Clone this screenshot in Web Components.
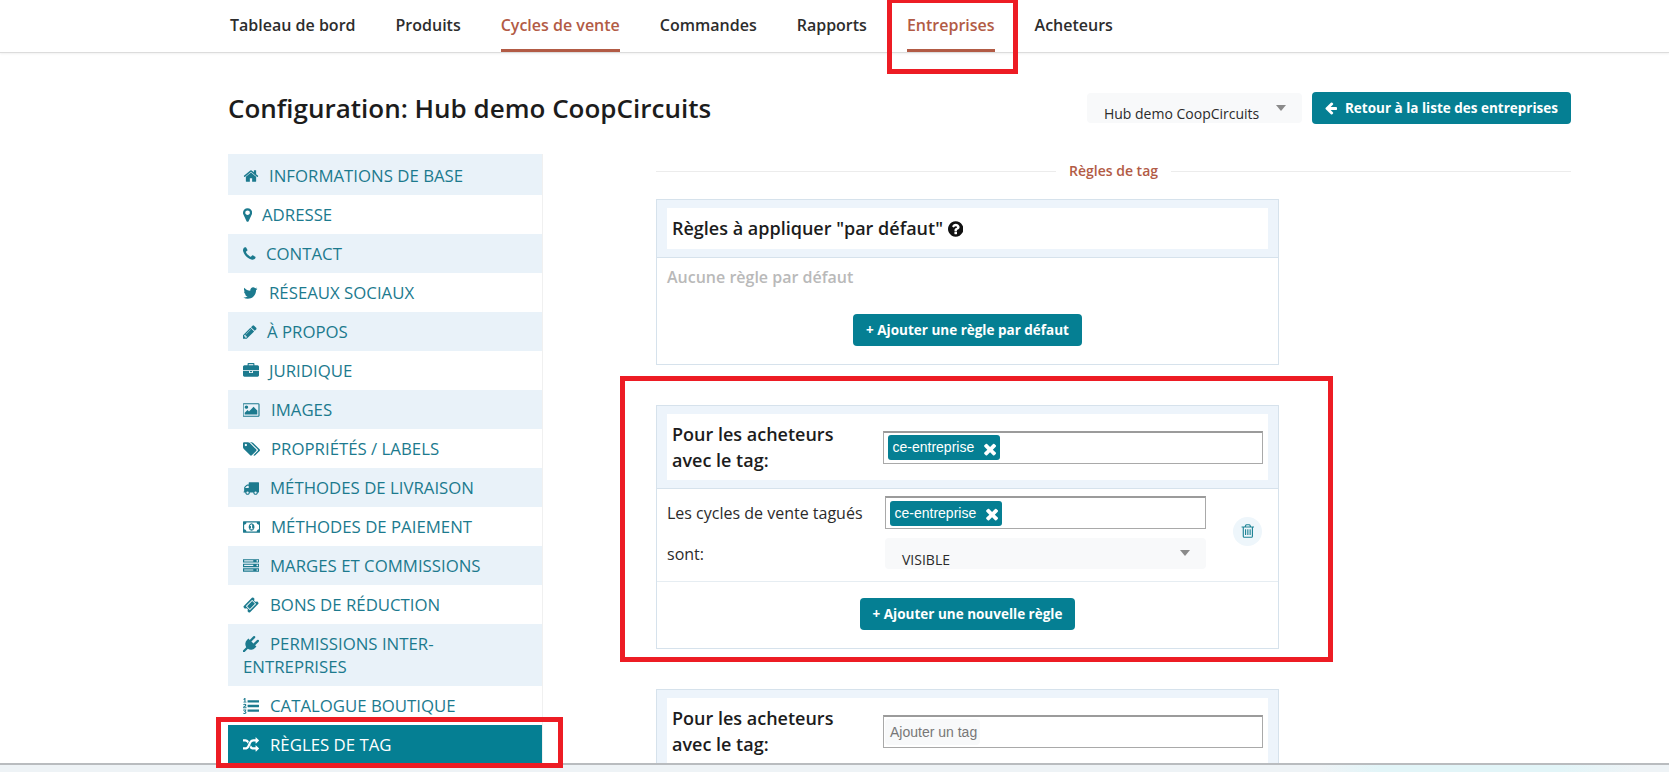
<!DOCTYPE html>
<html lang="fr">
<head>
<meta charset="utf-8">
<title>Règles de tag</title>
<style>
  html, body { margin: 0; height: 772px; overflow: hidden; background: #fff; }
  body { font-family: "Open Sans", "Liberation Sans", sans-serif; color: #222; }
</style>
</head>
<body>
<coop-page>
  <coop-nav slot="nav">
    <nav-link>Tableau de bord</nav-link>
    <nav-link>Produits</nav-link>
    <nav-link active>Cycles de vente</nav-link>
    <nav-link>Commandes</nav-link>
    <nav-link>Rapports</nav-link>
    <nav-link active>Entreprises</nav-link>
    <nav-link>Acheteurs</nav-link>
  </coop-nav>

  <page-head slot="head" title-text="Configuration: Hub demo CoopCircuits">
    <coop-select style="--w:215px;--h:30px;--pad:17px;--arrow:12px" >Hub demo CoopCircuits</coop-select>
    <coop-btn icon="arrow-left">Retour à la liste des entreprises</coop-btn>
  </page-head>

  <side-menu slot="side">
    <side-item icon="home" adv="26" alt>INFORMATIONS DE BASE</side-item>
    <side-item icon="marker" adv="19">ADRESSE</side-item>
    <side-item icon="phone" adv="23" alt>CONTACT</side-item>
    <side-item icon="twitter" adv="26">RÉSEAUX SOCIAUX</side-item>
    <side-item icon="pencil" adv="24" alt>À PROPOS</side-item>
    <side-item icon="briefcase" adv="26">JURIDIQUE</side-item>
    <side-item icon="picture" adv="28" alt>IMAGES</side-item>
    <side-item icon="tags" adv="28">PROPRIÉTÉS / LABELS</side-item>
    <side-item icon="truck" adv="27" alt>MÉTHODES DE LIVRAISON</side-item>
    <side-item icon="money" adv="28">MÉTHODES DE PAIEMENT</side-item>
    <side-item icon="server" adv="27" alt>MARGES ET COMMISSIONS</side-item>
    <side-item icon="ticket" adv="27">BONS DE RÉDUCTION</side-item>
    <side-item icon="plug" adv="27" alt>PERMISSIONS INTER-ENTREPRISES</side-item>
    <side-item icon="list" adv="27">CATALOGUE BOUTIQUE</side-item>
    <side-item icon="random" adv="27" active>RÈGLES DE TAG</side-item>
  </side-menu>

  <section-title slot="main">Règles de tag</section-title>

  <rule-card slot="main">
    <span slot="head" class="single">Règles à appliquer "par défaut" <coop-icon name="question" size="18" style="color:#111;vertical-align:-3px"></coop-icon></span>
    <empty-note>Aucune règle par défaut</empty-note>
    <btn-row style="--top:26px;--bottom:18px"><coop-btn>+ Ajouter une règle par défaut</coop-btn></btn-row>
  </rule-card>

  <rule-card slot="main">
    <tag-head slot="head"><tag-input><tag-chip>ce-entreprise</tag-chip></tag-input></tag-head>
    <tag-rule></tag-rule>
    <btn-row style="--top:16px;--bottom:18px"><coop-btn>+ Ajouter une nouvelle règle</coop-btn></btn-row>
  </rule-card>

  <rule-card slot="main">
    <tag-head slot="head"><tag-input placeholder="Ajouter un tag"></tag-input></tag-head>
  </rule-card>

  <red-box slot="over" style="left:887px;top:-2px;width:131px;height:76px"></red-box>
  <red-box slot="over" style="left:620px;top:376px;width:713px;height:286px"></red-box>
  <red-box slot="over" style="left:216px;top:717px;width:347px;height:51px"></red-box>
</coop-page>

<script>
const ICONS = {
  'home': [1792, 1792, 'M1472 992v480q0 26-19 45t-45 19h-384v-384h-256v384h-384q-26 0-45-19t-19-45v-480q0-1 .5-3t.5-3l575-474 575 474q1 2 1 6zm223-69l-62 74q-8 9-21 11h-3q-13 0-21-7l-692-577-692 577q-12 8-24 7-13-2-21-11l-62-74q-8-10-7-23.500t11-21.500l719-599q32-26 76-26t76 26l244 204v-195q0-14 9-23t23-9h192q14 0 23 9t9 23v408l219 182q10 8 11 21.500t-7 23.500z', 0],
  'marker': [1024, 1792, 'M1152 640q0-106-75-181t-181-75-181 75-75 181 75 181 181 75 181-75 75-181zm256 0q0 109-33 179l-364 774q-16 33-47.500 52t-67.500 19-67.500-19-46.500-52l-365-774q-33-70-33-179 0-212 150-362t362-150 362 150 150 362z', 384],
  'phone': [1408, 1792, 'M1600 1240q0 27-10 70.500t-21 68.500q-21 50-122 106-94 51-186 51-27 0-53-3.500t-57.500-12.500-47-14.500-55.500-20.500-49-18q-98-35-175-83-127-79-264-216t-216-264q-48-77-83-175-3-9-18-49t-20.500-55.500-14.500-47-12.500-57.500-3.500-53q0-92 51-186 56-101 106-122 25-11 68.500-21t70.500-10q14 0 21 3 18 6 53 76 11 19 30 54t35 63.500 31 53.500q3 4 17.500 25t21.500 35.500 7 28.500q0 20-28.500 50t-62 55-62 53-28.500 46q0 9 5 22.500t8.500 20.500 14 24 11.500 19q76 137 174 235t235 174q2 1 19 11.500t24 14 20.500 8.500 22.500 5q18 0 46-28.500t53-62 55-62 50-28.500q14 0 28.500 7t35.500 21.500 25 17.500q25 15 53.500 31t63.500 35 54 30q70 35 76 53 3 7 3 21z', 192],
  'twitter': [1664, 1792, 'M1684 408q-67 98-162 167 1 14 1 42 0 130-38 259.500t-115.500 248.500-184.500 210.500-258 146-323 54.500q-271 0-496-145 35 4 78 4 225 0 401-138-105-2-188-64.500t-114-159.500q33 5 61 5 43 0 85-11-112-23-185.500-111.500t-73.500-205.500v-4q68 38 146 41-66-44-105-115t-39-154q0-88 44-163 121 149 294.500 238.500t371.500 99.500q-8-38-8-74 0-134 94.500-228.500t228.500-94.500q140 0 236 102 109-21 205-78-37 115-142 178 93-10 186-50z', 64],
  'pencil': [1536, 1792, 'M491 1536l91-91-235-235-91 91v107h128v128h107zm523-928q0-22-22-22-10 0-17 7l-542 542q-7 7-7 17 0 22 22 22 10 0 17-7l542-542q7-7 7-17zm-54-192l416 416-832 832h-416v-416zm683 96q0 53-37 90l-166 166-416-416 166-165q36-38 90-38 53 0 91 38l235 234q37 39 37 91z', 128],
  'briefcase': [1792, 1792, 'M640 256h512v-128h-512v128zm1152 640v480q0 66-47 113t-113 47h-1472q-66 0-113-47t-47-113v-480h672v160q0 26 19 45t45 19h320q26 0 45-19t19-45v-160h672zm-768 0v128h-256v-128h256zm768-480v384h-1792v-384q0-66 47-113t113-47h352v-160q0-40 28-68t68-28h576q40 0 68 28t28 68v160h352q66 0 113 47t47 113z', 0],
  'picture': [1920, 1792, 'M576 576q0 80-56 136t-136 56-136-56-56-136 56-136 136-56 136 56 56 136zm1024 384v448h-1408v-192l320-320 160 160 512-512zm96-704h-1600q-13 0-22.500 9.500t-9.500 22.500v1216q0 13 9.500 22.500t22.500 9.500h1600q13 0 22.500-9.500t9.500-22.500v-1216q0-13-9.500-22.500t-22.500-9.500zm160 32v1216q0 66-47 113t-113 47h-1600q-66 0-113-47t-47-113v-1216q0-66 47-113t113-47h1600q66 0 113 47t47 113z', 0],
  'tags': [1920, 1792, 'M448 448q0-53-37.500-90.500t-90.500-37.500-90.500 37.500-37.500 90.500 37.500 90.500 90.500 37.500 90.500-37.500 37.500-90.500zm1067 576q0 53-37 90l-491 492q-39 37-91 37-53 0-90-37l-715-716q-38-37-64.500-101t-26.500-117v-416q0-52 38-90t90-38h416q53 0 117 26.500t102 64.500l715 714q37 39 37 91zm384 0q0 53-37 90l-491 492q-39 37-91 37-36 0-59-14t-53-45l470-470q37-37 37-90 0-52-37-91l-715-714q-38-38-102-64.500t-117-26.500h224q53 0 117 26.500t102 64.500l715 714q37 39 37 91z', 0],
  'truck': [1792, 1792, 'M640 1408q0-52-38-90t-90-38-90 38-38 90 38 90 90 38 90-38 38-90zm-384-512h384v-256h-158q-13 0-22 9l-195 195q-9 9-9 22v30zm1280 512q0-52-38-90t-90-38-90 38-38 90 38 90 90 38 90-38 38-90zm256-1088v1024q0 15-4 26.500t-13.500 18.500-16.500 11.500-23.500 6-22.500 2-25.500 0-22.500-.500q0 106-75 181t-181 75-181-75-75-181h-384q0 106-75 181t-181 75-181-75-75-181h-64q-3 0-22.500.500t-25.500 0-22.500-2-23.500-6-16.500-11.500-13.500-18.500-4-26.500q0-26 19-45t45-19v-320q0-8-.500-35t0-38 2.500-34.500 6.500-37 14-30.500 22.500-30l198-198q19-19 50.500-32t58.500-13h160v-192q0-26 19-45t45-19h1024q26 0 45 19t19 45z', 0],
  'money': [1920, 1792, 'M768 1152h384v-96h-128v-448h-114l-148 137 77 80q42-37 55-57h2v288h-128v96zm512-256q0 70-21 142t-59.500 134-101.500 101-138 39-138-39-101.500-101-59.500-134-21-142 21-142 59.500-134 101.500-101 138-39 138 39 101.500 101 59.500 134 21 142zm512 256v-512q-106 0-181-75t-75-181h-1152q0 106-75 181t-181 75v512q106 0 181 75t75 181h1152q0-106 75-181t181-75zm128-832v1152q0 26-19 45t-45 19h-1792q-26 0-45-19t-19-45v-1152q0-26 19-45t45-19h1792q26 0 45 19t19 45z', 0],
  'server': [1792, 1792, 'M128 1408h1024v-128h-1024v128zm0-512h1024v-128h-1024v128zm1568 448q0-40-28-68t-68-28-68 28-28 68 28 68 68 28 68-28 28-68zm-1568-960h1024v-128h-1024v128zm1568 448q0-40-28-68t-68-28-68 28-28 68 28 68 68 28 68-28 28-68zm0-512q0-40-28-68t-68-28-68 28-28 68 28 68 68 28 68-28 28-68zm96 832v384h-1792v-384h1792zm0-512v384h-1792v-384h1792zm0-512v384h-1792v-384h1792z', 0],
  'ticket': [1792, 1792, 'M1024 452l316 316-572 572-316-316zm-211 979l618-618q19-19 19-45t-19-45l-362-362q-18-18-45-18t-45 18l-618 618q-19 19-19 45t19 45l362 362q18 18 45 18t45-18zm889-637l-907 908q-37 37-90.500 37t-90.500-37l-126-126q56-56 56-136t-56-136-136-56-136 56l-125-126q-37-37-37-90.500t37-90.500l907-906q37-37 90.500-37t90.500 37l125 125q-56 56-56 136t56 136 136 56 136-56l126 125q37 37 37 90.500t-37 90.500z', 0],
  'plug': [1792, 1792, 'M1755 453q37 38 37 90.500t-37 90.500l-401 400 150 150-160 160q-163 163-389.500 186.500t-411.500-100.500l-362 362h-181v-181l362-362q-124-185-100.500-411.500t186.500-389.500l160-160 150 150 400-401q38-37 91-37t90 37 37 90.500-37 90.500l-400 401 234 234 401-400q38-37 91-37t90 37z', 0],
  'list': [1792, 1792, 'M381 1620q0 80-54.500 126t-135.500 46q-106 0-172-66l57-88q49 45 106 45 29 0 50.500-14.500t21.500-42.500q0-64-105-56l-26-56q8-10 32.500-43.500t42.500-54 37-38.500v-1q-16 0-48.500 1t-48.500 1v53h-106v-152h333v88l-95 115q51 12 81 49t30 88zm2-627v159h-362q-6-36-6-54 0-51 23.500-93t56.500-68 66-47.500 56.500-43.500 23.500-45q0-25-14.500-38.500t-39.500-13.500q-46 0-81 58l-85-59q24-51 71.500-79.500t105.500-28.500q73 0 123 41.500t50 112.500q0 50-34 91.500t-75 64.500-75.500 50.500-35.500 52.500h127v-60h105zm1409 319v192q0 13-9.500 22.500t-22.500 9.500h-1216q-13 0-22.500-9.500t-9.500-22.500v-192q0-14 9-23t23-9h1216q13 0 22.500 9.500t9.500 22.500zm-1408-899v99h-335v-99h107q0-41 .5-122t.5-121v-12h-2q-8 17-50 54l-71-76 136-127h106v404h108zm1408 387v192q0 13-9.500 22.500t-22.500 9.500h-1216q-13 0-22.500-9.500t-9.500-22.500v-192q0-14 9-23t23-9h1216q13 0 22.500 9.500t9.500 22.500zm0-512v192q0 13-9.500 22.500t-22.500 9.500h-1216q-13 0-22.500-9.500t-9.500-22.500v-192q0-13 9.500-22.500t22.500-9.500h1216q13 0 22.500 9.500t9.500 22.500z', 0],
  'random': [1792, 1792, 'M666 481q-60 92-137 273-22-45-37-72.500t-40.500-63.500-51-56.500-63-35-81.500-14.500h-224q-14 0-23-9t-9-23v-192q0-14 9-23t23-9h224q250 0 410 225zm1126 799q0 14-9 23l-320 320q-9 9-23 9-13 0-22.500-9.500t-9.500-22.500v-192q-32 0-85 .5t-81 1-73-1-71-5-64-10.500-63-18.500-58-28.500-59-40-55-53.500-56-69q59-93 136-273 22 45 37 72.500t40.500 63.500 51 56.500 63 35 81.500 14.500h256v-192q0-14 9-23t23-9q12 0 24 10l319 319q9 9 9 23zm0-896q0 14-9 23l-320 320q-9 9-23 9-13 0-22.500-9.500t-9.500-22.500v-192h-256q-48 0-87 15t-69 45-51 61.500-45 77.500q-32 62-78 171-29 66-49.500 111t-54 105-64 100-74 83-90 68.500-106.500 42-128 16.500h-224q-14 0-23-9t-9-23v-192q0-14 9-23t23-9h224q48 0 87-15t69-45 51-61.500 45-77.500q32-62 78-171 29-66 49.500-111t54-105 64-100 74-83 90-68.500 106.500-42 128-16.500h256v-192q0-14 9-23t23-9q12 0 24 10l319 319q9 9 9 23z', 0],
  'arrow-left': [1536, 1792, 'M1664 896v128q0 53-32.500 90.500t-84.500 37.500h-704l293 294q38 36 38 90t-38 90l-75 76q-37 37-90 37-52 0-91-37l-651-652q-37-37-37-90 0-52 37-91l651-650q38-38 91-38 52 0 90 38l75 74q38 38 38 91t-38 91l-293 293h704q52 0 84.500 37.500t32.500 90.500z', 128],
  'question': [1536, 1792, 'M1024 1376v-192q0-14-9-23t-23-9h-192q-14 0-23 9t-9 23v192q0 14 9 23t23 9h192q14 0 23-9t9-23zm256-672q0-88-55.500-163t-138.500-116-170-41q-243 0-371 213-15 24 8 42l132 100q7 6 19 6 16 0 25-12 53-68 86-92 34-24 86-24 48 0 85.500 26t37.500 59q0 38-20 61t-68 45q-63 28-115.500 86.500t-52.500 125.500v36q0 14 9 23t23 9h192q14 0 23-9t9-23q0-19 21.500-49.500t54.500-49.500q32-18 49-28.500t46-35 44.500-48 28-60.500 12.500-81zm384 192q0 209-103 385.500t-279.500 279.500-385.500 103-385.500-103-279.500-279.500-103-385.500 103-385.500 279.500-279.500 385.500-103 385.500 103 279.500 279.500 103 385.500z', 128],
  'trash': [1408, 1792, 'M704 736v576q0 14-9 23t-23 9h-64q-14 0-23-9t-9-23v-576q0-14 9-23t23-9h64q14 0 23 9t9 23zm256 0v576q0 14-9 23t-23 9h-64q-14 0-23-9t-9-23v-576q0-14 9-23t23-9h64q14 0 23 9t9 23zm256 0v576q0 14-9 23t-23 9h-64q-14 0-23-9t-9-23v-576q0-14 9-23t23-9h64q14 0 23 9t9 23zm128 724v-948h-896v948q0 22 7 40.500t14.500 27 10.500 8.500h832q3 0 10.500-8.500t14.500-27 7-40.500zm-672-1076h448l-48-117q-7-9-17-11h-317q-10 2-17 11zm928 32v64q0 14-9 23t-23 9h-96v948q0 83-47 143.500t-113 60.500h-832q-66 0-113-58.500t-47-141.500v-952h-96q-14 0-23-9t-9-23v-64q0-14 9-23t23-9h309l70-167q15-37 54-63t79-26h320q40 0 79 26t54 63l70 167h309q14 0 23 9t9 23z', 128],
  'times': [1408, 1792, 'M1490 1322q0 40-28 68l-136 136q-28 28-68 28t-68-28l-294-294-294 294q-28 28-68 28t-68-28l-136-136q-28-28-28-68t28-68l294-294-294-294q-28-28-28-68t28-68l136-136q28-28 68-28t68 28l294 294 294-294q28-28 68-28t68 28l136 136q28 28 28 68t-28 68l-294 294 294 294q28 28 28 68z', 192]
};

class CoopIcon extends HTMLElement {
  connectedCallback() {
    const [w, h, d, x] = ICONS[this.getAttribute('name')];
    const size = +this.getAttribute('size') || 16;
    this.attachShadow({mode: 'open'}).innerHTML = `
      <style>:host { display: inline-block; line-height: 0; } svg { display: block; fill: currentColor; }</style>
      <svg viewBox="${x} 0 ${w} ${h}" width="${size * w / h}" height="${size}"><path d="${d}"/></svg>`;
  }
}

class CoopPage extends HTMLElement {
  constructor() {
    super();
    this.attachShadow({mode: 'open'}).innerHTML = `
      <style>
        :host { display: block; position: relative; height: 772px; overflow: hidden; }
        .wrap { padding-left: 228px; width: 1343px; }
        .cols { display: grid; grid-template-columns: 315px 1fr; column-gap: 113px; margin-top: 30px; }
        .main { display: flex; flex-direction: column; gap: 40px; }
        .foot { position: absolute; left: 0; right: 0; top: 763px; height: 9px;
                background: linear-gradient(90deg, #eef3f6 0, #eef3f6 1320px, #e2f5f8 1380px, #e2f5f8 1560px, #eef3f6 1640px);
                border-top: 2px solid #b9bcbf; box-sizing: border-box; }
      </style>
      <slot name="nav"></slot>
      <div class="wrap">
        <slot name="head"></slot>
        <div class="cols">
          <slot name="side"></slot>
          <div class="main"><slot name="main"></slot></div>
        </div>
      </div>
      <div class="foot"></div>
      <slot name="over"></slot>`;
  }
}

class CoopNav extends HTMLElement {
  constructor() {
    super();
    this.attachShadow({mode: 'open'}).innerHTML = `
      <style>
        :host { display: flex; gap: 40px; height: 52px; padding-left: 230px; border-bottom: 1px solid #dcdcdc;
                box-shadow: 0 1px 2px rgba(0,0,0,.06); }
      </style>
      <slot></slot>`;
  }
}

class NavLink extends HTMLElement {
  constructor() {
    super();
    this.attachShadow({mode: 'open'}).innerHTML = `
      <style>
        :host { display: block; height: 52px; box-sizing: border-box; padding-top: 14px; border-bottom: 3px solid transparent;
                font: 600 16px/22px "Open Sans", sans-serif; color: #2d2d2d; white-space: nowrap; }
        :host([active]) { color: #b25b45; border-bottom-color: #b25b45; }
      </style>
      <slot></slot>`;
  }
}

class PageHead extends HTMLElement {
  connectedCallback() {
    this.attachShadow({mode: 'open'}).innerHTML = `
      <style>
        :host { display: flex; align-items: center; height: 32px; margin-top: 39px; }
        h1 { margin: 0 auto 0 0; font: 600 26px/32px "Open Sans", sans-serif; color: #1c1c1c; }
        .tools { display: flex; gap: 10px; align-items: center; }
      </style>
      <h1>${this.getAttribute('title-text')}</h1>
      <div class="tools"><slot></slot></div>`;
  }
}

class CoopSelect extends HTMLElement {
  constructor() {
    super();
    this.attachShadow({mode: 'open'}).innerHTML = `
      <style>
        :host { display: flex; justify-content: space-between; width: var(--w); height: var(--h); box-sizing: border-box;
                padding: 0 16px 0 var(--pad); background: #f8f9fa; border-radius: 4px; overflow: hidden;
                font: 400 14px/18px "Open Sans", sans-serif; color: #2b2b2b; }
        span { align-self: flex-end; white-space: nowrap; }
        i { width: 0; height: 0; margin-top: var(--arrow); border: 5.500px solid transparent; border-top: 6px solid #8a8a8a; border-bottom: 0; }
      </style>
      <span><slot></slot></span><i></i>`;
  }
}

class CoopBtn extends HTMLElement {
  connectedCallback() {
    const icon = this.getAttribute('icon');
    this.attachShadow({mode: 'open'}).innerHTML = `
      <style>
        :host { display: inline-flex; align-items: center; gap: 8px; height: 32px; padding: 0 13px; box-sizing: border-box;
                background: #057f93; color: #fff; border-radius: 4px;
                font: 700 13.500px/18px "Open Sans", sans-serif; white-space: nowrap; }
      </style>
      ${icon ? `<coop-icon name="${icon}" size="14"></coop-icon>` : ''}<slot></slot>`;
  }
}

class SideMenu extends HTMLElement {
  constructor() {
    super();
    this.attachShadow({mode: 'open'}).innerHTML = `
      <style>:host { display: block; border-right: 1px solid #f0f0f0; width: 315px; box-sizing: border-box; }</style>
      <slot></slot>`;
  }
}

class SideItem extends HTMLElement {
  connectedCallback() {
    this.attachShadow({mode: 'open'}).innerHTML = `
      <style>
        :host { display: block; padding: 8px 30px 8px 15px; background: #fff; color: #1c7a8e;
                font: 400 16.800px/23px "Open Sans", sans-serif; }
        :host(:first-child) { padding-top: 10px; }
        :host([alt]) { background: #e9f2f9; }
        :host([active]) { background: #057f93; color: #fff; }
        .ic { display: inline-block; width: ${this.getAttribute('adv')}px; line-height: 0; vertical-align: -2px; }
      </style>
      <span class="ic"><coop-icon name="${this.getAttribute('icon')}" size="16"></coop-icon></span><slot></slot>`;
  }
}

class SectionTitle extends HTMLElement {
  constructor() {
    super();
    this.attachShadow({mode: 'open'}).innerHTML = `
      <style>
        :host { display: flex; align-items: center; gap: 13px; height: 34px; margin-bottom: -29px;
                font: 600 14px/18px "Open Sans", sans-serif; color: #b25b45; }
        i { flex: 1; height: 1px; background: #ececec; }
      </style>
      <i></i><slot></slot><i></i>`;
  }
}

class RuleCard extends HTMLElement {
  constructor() {
    super();
    this.attachShadow({mode: 'open'}).innerHTML = `
      <style>
        :host { display: block; width: 623px; box-sizing: border-box; border: 1px solid #d6e2ec; }
        .head { background: #edf4fb; padding: 8px 10px 8px; border-bottom: 1px solid #d6e2ec; }
        .inner { background: #fff; padding: 0 5px; font: 600 18px/41px "Open Sans", sans-serif; color: #1c1c1c; }
      </style>
      <div class="head"><div class="inner"><slot name="head"></slot></div></div>
      <slot></slot>`;
  }
}

class TagHead extends HTMLElement {
  constructor() {
    super();
    this.attachShadow({mode: 'open'}).innerHTML = `
      <style>
        :host { display: grid; grid-template-columns: 211px 1fr; align-items: center; padding: 7px 0; }
        div { font: 600 18px/26px "Open Sans", sans-serif; color: #1c1c1c; }
      </style>
      <div>Pour les acheteurs<br>avec le tag:</div><slot></slot>`;
  }
}

class TagInput extends HTMLElement {
  connectedCallback() {
    const ph = this.getAttribute('placeholder');
    this.attachShadow({mode: 'open'}).innerHTML = `
      <style>
        :host { display: flex; align-items: center; height: 33px; box-sizing: border-box; padding: 0 4px;
                border: 1px solid #a9a9a9; border-top: 2px solid #9b9b9b; background: #fff; }
        .ph { padding: 0 3px 0 5px; margin-left: -3px; font: 14px/26px "Liberation Sans", Arial, sans-serif;
              color: #777; background: #f8f9fa; border-radius: 4px; }
      </style>
      ${ph ? `<span class="ph">${ph}</span>` : ''}<slot></slot>`;
  }
}

class TagChip extends HTMLElement {
  constructor() {
    super();
    this.attachShadow({mode: 'open'}).innerHTML = `
      <style>
        :host { display: inline-flex; align-items: center; gap: 9px; height: 25px; box-sizing: border-box; padding: 0 3px 0 4.500px;
                background: #057f93; color: #fff; border-radius: 3px; font: 14px/25px "Liberation Sans", Arial, sans-serif; }
        coop-icon { margin-top: 2px; }
      </style>
      <slot></slot><coop-icon name="times" size="18"></coop-icon>`;
  }
}

class TagRule extends HTMLElement {
  constructor() {
    super();
    this.attachShadow({mode: 'open'}).innerHTML = `
      <style>
        :host { display: grid; grid-template-columns: 218px 321px 29px; grid-template-rows: 33px 31px; column-gap: 0;
                row-gap: 9px; align-items: center; padding: 7px 0 12px 10px; border-bottom: 1px solid #e6edf2;
                font: 400 16px/20px "Open Sans", sans-serif; color: #2b2b2b; }
        .trash { grid-column: 3; grid-row: 1 / span 2; margin: -3px 0 0 27px; width: 29px; height: 29px; border-radius: 50%;
                 background: #eef6fb; color: #1f8496; display: flex; align-items: center; justify-content: center; }
        .sel { --w: 321px; --h: 31px; --pad: 17px; --arrow: 12px; }
      </style>
      <span>Les cycles de vente tagués</span>
      <tag-input><tag-chip>ce-entreprise</tag-chip></tag-input>
      <div class="trash"><coop-icon name="trash" size="16"></coop-icon></div>
      <span>sont:</span>
      <coop-select class="sel">VISIBLE</coop-select>`;
  }
}

class EmptyNote extends HTMLElement {
  constructor() {
    super();
    this.attachShadow({mode: 'open'}).innerHTML = `
      <style>:host { display: block; padding: 8px 10px 0; font: 600 16px/22px "Open Sans", sans-serif; color: #b9b9b9; }</style>
      <slot></slot>`;
  }
}

class BtnRow extends HTMLElement {
  constructor() {
    super();
    this.attachShadow({mode: 'open'}).innerHTML = `
      <style>:host { display: flex; justify-content: center; padding: var(--top) 0 var(--bottom); }</style>
      <slot></slot>`;
  }
}

class RedBox extends HTMLElement {
  constructor() {
    super();
    this.attachShadow({mode: 'open'}).innerHTML = `
      <style>:host { display: block; position: absolute; box-sizing: border-box; border: 5px solid #ed1c24; pointer-events: none; }</style>`;
  }
}

customElements.define('coop-icon', CoopIcon);
customElements.define('coop-page', CoopPage);
customElements.define('coop-nav', CoopNav);
customElements.define('nav-link', NavLink);
customElements.define('page-head', PageHead);
customElements.define('coop-select', CoopSelect);
customElements.define('coop-btn', CoopBtn);
customElements.define('side-menu', SideMenu);
customElements.define('side-item', SideItem);
customElements.define('section-title', SectionTitle);
customElements.define('rule-card', RuleCard);
customElements.define('tag-head', TagHead);
customElements.define('tag-input', TagInput);
customElements.define('tag-chip', TagChip);
customElements.define('tag-rule', TagRule);
customElements.define('empty-note', EmptyNote);
customElements.define('btn-row', BtnRow);
customElements.define('red-box', RedBox);
</script>
</body>
</html>
